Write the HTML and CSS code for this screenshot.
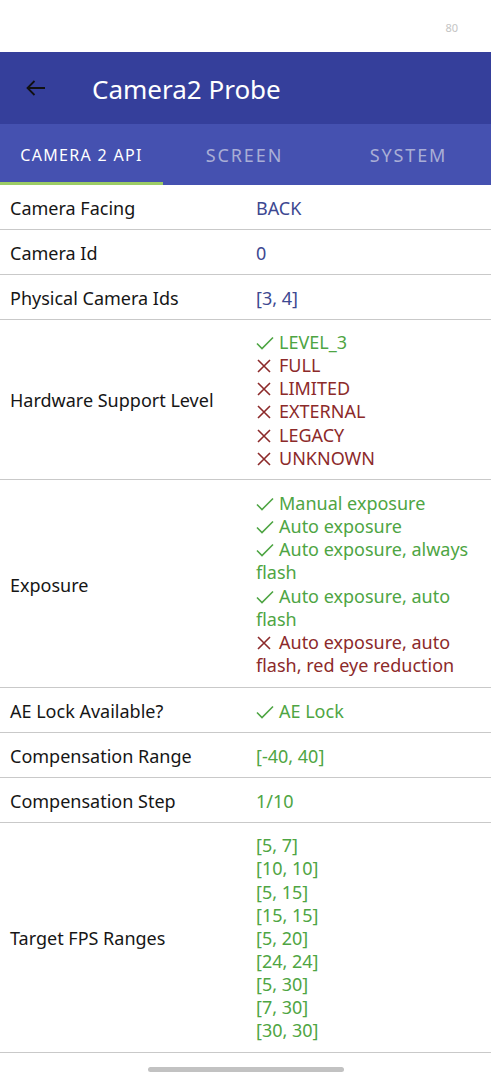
FILE: index.html
```html
<!DOCTYPE html>
<html lang="en">
<head>
  <meta charset="UTF-8" />
  <meta name="viewport" content="width=device-width, initial-scale=1" />
  <title>Camera2 Probe</title>
  <link rel="stylesheet" href="styles.css">
</head>
<body>
  <div id="status-bar"><span class="battery">80</span></div>

  <header id="toolbar">
    <svg class="back" width="24" height="24" viewBox="0 0 24 24">
      <path d="M21 12H3.5M10.5 5l-7 7 7 7" fill="none" stroke="#111" stroke-width="1.8" />
    </svg>
    <h1>Camera2 Probe</h1>
  </header>

  <nav id="tabs">
    <div class="tab active">CAMERA 2 API</div>
    <div class="tab">SCREEN</div>
    <div class="tab">SYSTEM</div>
  </nav>

  <main id="list">
    <div class="row">
      <div class="label">Camera Facing</div>
      <div class="value info">BACK</div>
    </div>
    <div class="row">
      <div class="label">Camera Id</div>
      <div class="value info">0</div>
    </div>
    <div class="row">
      <div class="label">Physical Camera Ids</div>
      <div class="value info">[3, 4]</div>
    </div>
    <div class="row">
      <div class="label">Hardware Support Level</div>
      <div class="value multi">
        <div class="yes"><svg class="mark" viewBox="0 0 18 14"><path d="M1 7.5l5 5L17 1.5" /></svg>LEVEL_3</div>
        <div class="no"><svg class="mark" viewBox="0 0 18 14"><path d="M2 1l12 12M14 1L2 13" /></svg>FULL</div>
        <div class="no"><svg class="mark" viewBox="0 0 18 14"><path d="M2 1l12 12M14 1L2 13" /></svg>LIMITED</div>
        <div class="no"><svg class="mark" viewBox="0 0 18 14"><path d="M2 1l12 12M14 1L2 13" /></svg>EXTERNAL</div>
        <div class="no"><svg class="mark" viewBox="0 0 18 14"><path d="M2 1l12 12M14 1L2 13" /></svg>LEGACY</div>
        <div class="no"><svg class="mark" viewBox="0 0 18 14"><path d="M2 1l12 12M14 1L2 13" /></svg>UNKNOWN</div>
      </div>
    </div>
    <div class="row">
      <div class="label">Exposure</div>
      <div class="value multi wrapped">
        <div class="yes"><svg class="mark" viewBox="0 0 18 14"><path d="M1 7.5l5 5L17 1.5" /></svg>Manual exposure</div>
        <div class="yes"><svg class="mark" viewBox="0 0 18 14"><path d="M1 7.5l5 5L17 1.5" /></svg>Auto exposure</div>
        <div class="yes"><svg class="mark" viewBox="0 0 18 14"><path d="M1 7.5l5 5L17 1.5" /></svg>Auto exposure, always flash</div>
        <div class="yes"><svg class="mark" viewBox="0 0 18 14"><path d="M1 7.5l5 5L17 1.5" /></svg>Auto exposure, auto flash</div>
        <div class="no"><svg class="mark" viewBox="0 0 18 14"><path d="M2 1l12 12M14 1L2 13" /></svg>Auto exposure, auto flash, red eye reduction</div>
      </div>
    </div>
    <div class="row">
      <div class="label">AE Lock Available?</div>
      <div class="value yes"><svg class="mark" viewBox="0 0 18 14"><path d="M1 7.5l5 5L17 1.5" /></svg>AE Lock</div>
    </div>
    <div class="row">
      <div class="label">Compensation Range</div>
      <div class="value yes">[-40, 40]</div>
    </div>
    <div class="row">
      <div class="label">Compensation Step</div>
      <div class="value yes">1/10</div>
    </div>
    <div class="row">
      <div class="label">Target FPS Ranges</div>
      <div class="value multi yes">
        <div>[5, 7]</div>
        <div>[10, 10]</div>
        <div>[5, 15]</div>
        <div>[15, 15]</div>
        <div>[5, 20]</div>
        <div>[24, 24]</div>
        <div>[5, 30]</div>
        <div>[7, 30]</div>
        <div>[30, 30]</div>
      </div>
    </div>
  </main>

  <div id="home-bar"><span></span></div>
</body>
</html>
```

FILE: styles.css
```css
body {
  margin: 0;
  font-family: 'Noto Sans', 'DejaVu Sans', sans-serif;
  background: #fff;
  color: #161616;
  width: 491px;
}

#status-bar {
  height: 52px;
  display: flex;
  justify-content: flex-end;
  align-items: center;
  padding-right: 33px;
  box-sizing: border-box;
}

.battery {
  font-size: 11px;
  color: #c4c4c4;
  margin-top: 2px;
}

#toolbar {
  height: 72px;
  background: #353f9b;
  display: flex;
  align-items: center;
  padding-left: 24px;
}

#toolbar .back {
  margin-right: 44px;
}

#toolbar h1 {
  margin: 0;
  font-size: 26px;
  font-weight: normal;
  color: #fff;
  margin-top: 1px;
}

#tabs {
  height: 61px;
  background: #4551b0;
  display: grid;
  grid-template-columns: 163px 163px 165px;
}

.tab {
  display: flex;
  align-items: center;
  justify-content: center;
  font-size: 18px;
  letter-spacing: 1.9px;
  color: #a9aed6;
  box-sizing: border-box;
  border-bottom: 3px solid transparent;
  padding-top: 3px;
}

.tab.active {
  color: #fff;
  font-size: 16px;
  letter-spacing: 1.3px;
  border-bottom-color: #9ccc65;
}

.row {
  display: grid;
  grid-template-columns: 246px 222px;
  align-items: center;
  padding: 12px 0 10px 10px;
  border-bottom: 1px solid #c9c9c9;
  font-size: 18px;
  line-height: 22px;
}

.value.multi {
  line-height: 23.15px;
  margin: -1px 0 -1px;
}

.value.wrapped {
  margin: 0;
}

.value.info {
  color: #3d4891;
}

.yes {
  color: #4ea543;
}

.no {
  color: #8c2a2a;
}

.mark {
  display: inline-block;
  width: 18px;
  height: 14px;
  margin-right: 5px;
  vertical-align: -1px;
  fill: none;
  stroke: currentColor;
  stroke-width: 1.6;
}

#home-bar {
  display: flex;
  justify-content: center;
  padding-top: 14px;
}

#home-bar span {
  width: 196px;
  height: 5px;
  border-radius: 3px;
  background: #c2c2c2;
}
```
